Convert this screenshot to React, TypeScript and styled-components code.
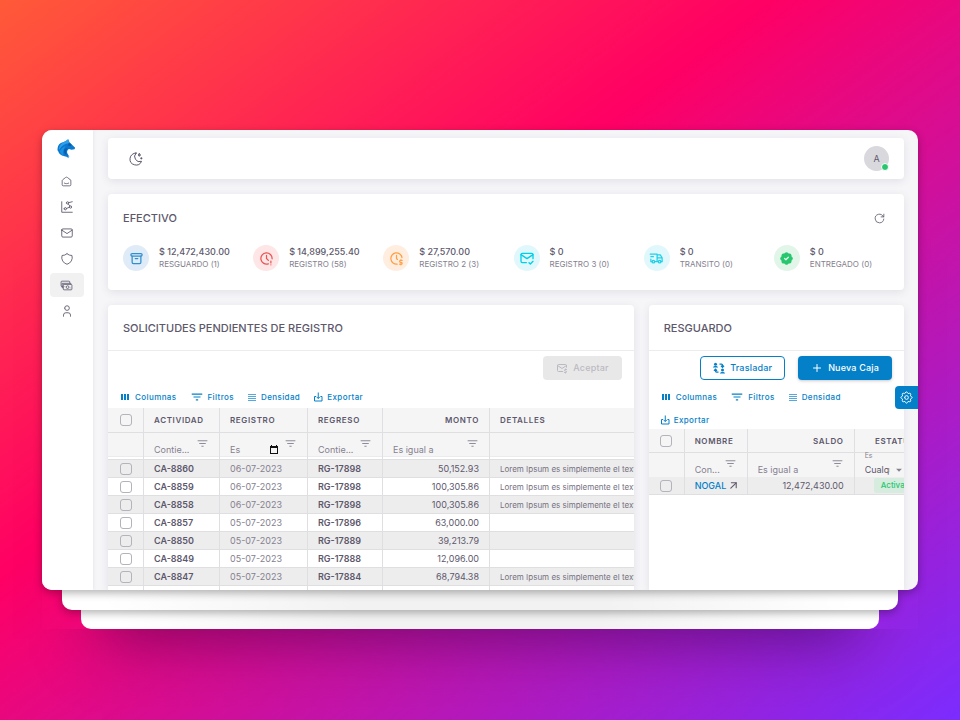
import React from "react";
import styled, { createGlobalStyle, css } from "styled-components";
import {
  TbSmartHome,
  TbChartDots2,
  TbMail,
  TbShield,
  TbUser,
  TbMoonStars,
  TbArchive,
  TbClockExclamation,
  TbClockDollar,
  TbMailCheck,
  TbMailDollar,
  TbTruckDelivery,
  TbRosetteDiscountCheckFilled,
  TbReload,
  TbArrowUpRight,
  TbPlus,
  TbSettings,
} from "react-icons/tb";
import { MdFilterList, MdArrowDropDown } from "react-icons/md";

const ink = "#5d586c";
const muted = "#85818f";
const primary = "#0480c8";
const line = "#dfdfe1";

const GlobalStyle = createGlobalStyle`
  * { box-sizing: border-box; }
  body {
    margin: 0;
    font-family: Inter, "Liberation Sans", sans-serif;
    font-size: 9px;
    line-height: 12px;
    color: ${ink};
  }
  button, input, select { font: inherit; color: inherit; }
`;

const Stage = styled.div`
  height: 100vh;
  display: flex;
  padding: 130px 42px 91px;
  overflow: hidden;
  background: linear-gradient(to bottom right, #ff5a38 0%, #ff0064 40%, #7b2cff 100%);
`;

const Stack = styled.div`
  flex: 1;
  min-width: 0;
  display: flex;
  flex-direction: column;
  box-shadow: 0 70px 60px -60px rgba(30, 0, 60, 0.5);
`;

const WindowShadow = styled.div`
  position: relative;
  z-index: 3;
  flex: 1;
  min-height: 0;
  display: flex;
  border-radius: 10px;
  box-shadow: 0 3px 8px rgba(0, 0, 0, 0.3);
`;

const Window = styled.div`
  position: relative;
  flex: 1;
  min-width: 0;
  display: flex;
  overflow: hidden;
  border-radius: 10px;
  background: #f6f6f9;
`;

const Layer = styled.div<{ $depth: number }>`
  position: relative;
  z-index: ${(p) => 3 - p.$depth};
  flex: none;
  height: ${(p) => (p.$depth === 1 ? 20 : 19)}px;
  margin: 0 ${(p) => (p.$depth === 1 ? 20 : 39)}px;
  border-radius: 0 0 10px 10px;
  background: linear-gradient(to right, #fff 5%, #f2f2f2 35%, #f2f2f2 65%, #fff 95%);
  box-shadow: ${(p) => (p.$depth === 1 ? "0 3px 8px rgba(0, 0, 0, 0.3)" : "none")};
`;

const Sidebar = styled.nav`
  flex: none;
  width: 51px;
  display: flex;
  flex-direction: column;
  align-items: center;
  gap: 2px;
  padding: 9px 2px 0 0;
  background: #fff;
  box-shadow: 0 0 4px rgba(75, 70, 92, 0.12);
`;

const Brand = styled.a`
  display: flex;
  height: 28px;
`;

const NavLink = styled.a<{ $active?: boolean }>`
  display: flex;
  align-items: center;
  justify-content: center;
  width: 34px;
  height: 24px;
  border-radius: 4px;
  color: ${ink};
  background: ${(p) => (p.$active ? "#f1f1f2" : "transparent")};
  svg {
    stroke-width: 1.5;
  }
`;

const Main = styled.main`
  flex: 1;
  min-width: 0;
  display: flex;
  flex-direction: column;
  gap: 15px;
  padding: 8px 14px 0 15px;
`;

const panel = css`
  background: #fff;
  border-radius: 4px;
  box-shadow: 0 2px 8px rgba(75, 70, 92, 0.12);
`;

const TopBar = styled.header`
  ${panel}
  flex: none;
  display: flex;
  align-items: center;
  justify-content: space-between;
  height: 41px;
  padding: 0 15px 0 20px;
`;

const IconButton = styled.button`
  display: flex;
  padding: 0;
  border: 0;
  background: none;
  color: ${ink};
  svg {
    stroke-width: 1.5;
  }
`;

const Avatar = styled.div`
  position: relative;
  display: flex;
  align-items: center;
  justify-content: center;
  width: 25px;
  height: 25px;
  border-radius: 50%;
  background: #d9d8dd;
`;

const Online = styled.span`
  position: absolute;
  right: 0;
  bottom: 0;
  width: 8px;
  height: 8px;
  border: 1px solid #fff;
  border-radius: 50%;
  background: #28c76f;
`;

const Card = styled.section`
  ${panel}
  flex: none;
  min-width: 0;
`;

const CardHead = styled.div<{ $ruled?: boolean }>`
  display: flex;
  align-items: center;
  justify-content: space-between;
  height: ${(p) => (p.$ruled ? 46 : 48)}px;
  padding: 0 18px 0 15px;
  border-bottom: ${(p) => (p.$ruled ? "1px solid #ececef" : "0")};
`;

const Title = styled.h2`
  margin: 0;
  font-size: 11px;
  line-height: 16px;
  font-weight: 500;
`;

const Stats = styled.div`
  display: grid;
  grid-template-columns: repeat(6, 1fr);
  padding: 3px 0 19px 15px;
`;

const Stat = styled.div`
  display: flex;
  align-items: center;
  gap: 10px;
`;

const Bubble = styled.span<{ $bg: string; $fg: string }>`
  display: flex;
  align-items: center;
  justify-content: center;
  flex: none;
  width: 26px;
  height: 26px;
  border-radius: 50%;
  background: ${(p) => p.$bg};
  color: ${(p) => p.$fg};
`;

const StatText = styled.div`
  white-space: nowrap;
`;

const Amount = styled.div`
  font-weight: 500;
  line-height: 13px;
`;

const Caption = styled.div`
  font-size: 8px;
  line-height: 13px;
  color: ${muted};
`;

const Panels = styled.div`
  flex: 1;
  min-height: 0;
  display: grid;
  grid-template-columns: repeat(12, minmax(0, 1fr));
  gap: 15px;
`;

const GridCard = styled(Card)<{ $span: number }>`
  grid-column: span ${(p) => p.$span};
  overflow: hidden;
  border-radius: 4px 4px 0 0;
`;

const Actions = styled.div`
  display: flex;
  justify-content: flex-end;
  gap: 13px;
  padding: 5px 12px 0;
`;

const ActionButton = styled.button<{ $kind: "solid" | "outline" | "disabled" }>`
  display: flex;
  align-items: center;
  gap: 5px;
  height: 24px;
  padding: 0 12px;
  border-radius: 4px;
  border: 1px solid transparent;
  font-weight: 500;
  letter-spacing: 0.02em;
  white-space: nowrap;
  ${(p) =>
    p.$kind === "solid" &&
    css`
      background: ${primary};
      color: #fff;
      box-shadow: 0 1px 3px rgba(75, 70, 92, 0.3);
    `}
  ${(p) =>
    p.$kind === "outline" &&
    css`
      background: #fff;
      color: ${primary};
      border-color: ${primary};
    `}
  ${(p) =>
    p.$kind === "disabled" &&
    css`
      background: #e8e8e9;
      color: #bcbac1;
    `}
`;

const Toolbar = styled.div`
  display: flex;
  flex-wrap: wrap;
  align-content: flex-start;
  gap: 7px 13px;
  min-height: 28px;
  padding: 9px 11px 1px;
`;

const Tool = styled.button`
  display: flex;
  align-items: center;
  gap: 4px;
  height: 16px;
  padding: 0;
  border: 0;
  background: none;
  color: ${primary};
  font-size: 8px;
  font-weight: 500;
  letter-spacing: 0.05em;
`;

const Table = styled.table`
  table-layout: fixed;
  border-collapse: separate;
  border-spacing: 0;
  width: 100%;
  min-width: max-content;
`;

const Col = styled.col<{ $w: number }>`
  width: ${(p) => p.$w}px;
`;

const HeadCell = styled.th<{ $end?: boolean; $h?: number }>`
  height: ${(p) => p.$h ?? 25}px;
  padding: 0 10px;
  border-bottom: 1px solid ${line};
  border-right: 1px solid ${line};
  background: #f5f5f6;
  font-size: 8px;
  line-height: 10px;
  font-weight: 600;
  letter-spacing: 0.08em;
  white-space: nowrap;
  text-align: ${(p) => (p.$end ? "right" : "left")};
  &:last-child {
    border-right: 0;
  }
`;

const FilterCell = styled.td<{ $ruled?: boolean }>`
  height: ${(p) => (p.$ruled ? 27 : 24)}px;
  padding: 0 10px;
  vertical-align: top;
  border-right: 1px solid ${line};
  background: #f5f5f6;
  box-shadow: ${(p) =>
    p.$ruled ? `inset 0 -1px ${line}, inset 0 -3px #fff, inset 0 -4px #ebebed` : "none"};
  &:last-child {
    border-right: 0;
  }
`;

const FilterBox = styled.div`
  display: flex;
  align-items: flex-start;
  height: 23px;
  color: ${muted};
  svg {
    flex: none;
  }
`;

const FilterInput = styled.input`
  flex: 1;
  align-self: flex-end;
  width: 0;
  min-width: 0;
  height: 12px;
  padding: 0;
  border: 0;
  outline: 0;
  background: none;
  &::placeholder {
    color: ${muted};
    opacity: 1;
  }
`;

const FilterIcon = styled.span`
  display: flex;
  padding-top: 4px;
  opacity: 0.9;
`;

const DateIcon = styled.span`
  display: flex;
  align-self: flex-end;
  padding-bottom: 2px;
  margin-right: 6px;
  color: #111;
`;

const StatusField = styled.label`
  display: block;
  font-size: 7px;
  line-height: 5px;
  color: ${muted};
`;

const StatusSelect = styled.span`
  display: flex;
  align-items: center;
  gap: 2px;
  padding-top: 5px;
`;

const Select = styled.select`
  flex: none;
  width: 25px;
  height: 14px;
  padding: 0;
  border: 0;
  appearance: none;
  background: none;
  font-size: 9px;
  line-height: 14px;
  color: ${ink};
`;

const Row = styled.tr<{ $striped?: boolean }>`
  background: ${(p) => (p.$striped ? "#ededee" : "#fff")};
`;

const Cell = styled.td<{ $kind?: "strong" | "soft" | "number" | "note" }>`
  height: 18px;
  padding: 0 10px;
  border-bottom: 1px solid ${line};
  border-right: 1px solid ${line};
  white-space: nowrap;
  line-height: 12px;
  &:last-child {
    border-right: 0;
  }
  ${(p) => p.$kind === "strong" && css`font-weight: 600;`}
  ${(p) => p.$kind === "soft" && css`color: ${muted};`}
  ${(p) => p.$kind === "number" && css`text-align: right;`}
  ${(p) => p.$kind === "note" && css`font-size: 8px; color: #75717f;`}
`;

const Check = styled.input`
  display: block;
  appearance: none;
  width: 12px;
  height: 12px;
  margin: 0 auto;
  border: 1px solid #b4b2ba;
  border-radius: 3px;
`;

const BoxLink = styled.a`
  display: flex;
  align-items: center;
  gap: 1px;
  color: ${primary};
  font-weight: 500;
  text-decoration: none;
  svg {
    flex: none;
    color: ${ink};
  }
`;

const Chip = styled.span`
  display: inline-block;
  margin-left: 9px;
  padding: 0 7px;
  height: 15px;
  border-radius: 2px;
  background: #d5ecdf;
  color: #28c76f;
  font-size: 8px;
  line-height: 15px;
  font-weight: 500;
`;

const SettingsTab = styled.button`
  position: absolute;
  top: 256px;
  right: 0;
  display: flex;
  align-items: center;
  justify-content: center;
  width: 23px;
  height: 23px;
  padding: 0;
  border: 0;
  border-radius: 4px 0 0 4px;
  background: ${primary};
  color: #fff;
  svg {
    stroke-width: 1.5;
  }
`;

const WolfLogo = () => (
  <svg width="19" height="20" viewBox="0 0 56 60" aria-hidden="true">
    <path
      fill="#0a78cf"
      d="M33 1 L37 10 L43 16 L54 26 L52 31 L43 32 L36 30 C31 32 29 36 30 42 L37 54 L33 52 L35 58 L28 53 L22 52 C11 49 4 43 4 38 L1 34 C1 24 3 16 11 12 L25 7 Z"
    />
    <path fill="#2ea0ea" d="M25 7 L33 1 L36 12 L25 15 C17 18 10 24 6 33 C5 22 10 13 25 7 Z" />
    <path fill="#0b5cab" d="M36 12 L43 16 L40 22 L31 19 Z M22 30 L32 27 C27 32 25 38 28 49 C21 44 19 37 22 30 Z" />
    <path fill="#1b8fe0" d="M8 36 C13 28 18 24 26 21 C18 30 16 42 20 51 C13 48 9 43 8 36 Z" />
  </svg>
);

const CashIcon = () => (
  <svg width="13" height="13" viewBox="0 0 24 24" fill="none" stroke="currentColor" strokeLinejoin="round" aria-hidden="true">
    <path d="M18 8V5.500a1.500 1.500 0 0 0-1.500-1.500h-13A1.500 1.500 0 0 0 2 5.500v7A1.500 1.500 0 0 0 3.500 14H6" />
    <path d="M20 10V8H4v8h2" />
    <path d="M6 10h14.500A1.500 1.500 0 0 1 22 11.500v7a1.500 1.500 0 0 1-1.500 1.500h-13A1.500 1.500 0 0 1 6 18.500z" />
    <circle cx="14" cy="15" r="2.500" />
    <path d="M9 13v1M19 16v1" />
  </svg>
);

const TransferIcon = () => (
  <svg width="12" height="12" viewBox="0 0 24 24" fill="none" stroke="currentColor" strokeWidth="2.500" aria-hidden="true">
    <circle cx="5" cy="4.500" r="3" fill="currentColor" stroke="none" />
    <path fill="currentColor" stroke="none" d="M0 11c0-2 2-3 5-3s5 1 5 3z" />
    <circle cx="19" cy="16" r="3" fill="currentColor" stroke="none" />
    <path fill="currentColor" stroke="none" d="M14 23c0-2 2-3 5-3s5 1 5 3z" />
    <path d="M13 4h4a2 2 0 0 1 2 2v4M16 7.500l3 3 3-3M11 20H7a2 2 0 0 1-2-2v-3M2 17.500l3-3 3 3" />
  </svg>
);

const ColumnsIcon = () => (
  <svg width="12" height="12" viewBox="0 0 12 12" fill="currentColor" aria-hidden="true">
    <path d="M2 3h2v6H2zM5 3h2v6H5zM8 3h2v6H8z" />
  </svg>
);

const DensityIcon = () => (
  <svg width="10" height="12" viewBox="0 0 10 12" stroke="currentColor" strokeOpacity="0.85" aria-hidden="true">
    <path d="M1 3.500h8M1 5.500h8M1 7.500h8M1 9.500h8" strokeWidth="0.800" />
  </svg>
);

const DownloadIcon = () => (
  <svg width="10" height="10" viewBox="0 0 20 20" fill="none" stroke="currentColor" strokeWidth="2" strokeLinejoin="round" aria-hidden="true">
    <path d="M6 9H3v9h15V9h-3M10.500 1v12M7 9.500l3.500 3.500L14 9.500" />
  </svg>
);

const CalendarIcon = () => (
  <svg width="8" height="9" viewBox="0 0 8 9" aria-hidden="true">
    <path fill="currentColor" fillRule="evenodd" d="M0 1h1V0h1v1h4V0h1v1h1v8H0zM1 3v5h6V3z" />
  </svg>
);

const stats = [
  { amount: "$ 12,472,430.00", label: "RESGUARDO (1)", bg: "#dfecf7", fg: "#2f8fd0", icon: <TbArchive size={15} /> },
  { amount: "$ 14,899,255.40", label: "REGISTRO (58)", bg: "#fde6e5", fg: "#ea5455", icon: <TbClockExclamation size={15} /> },
  { amount: "$ 27,570.00", label: "REGISTRO 2 (3)", bg: "#ffeee0", fg: "#ff9f43", icon: <TbClockDollar size={15} /> },
  { amount: "$ 0", label: "REGISTRO 3 (0)", bg: "#e0f8fc", fg: "#00cfe8", icon: <TbMailCheck size={16} /> },
  { amount: "$ 0", label: "TRANSITO (0)", bg: "#e0f8fc", fg: "#1fd0e8", icon: <TbTruckDelivery size={15} /> },
  { amount: "$ 0", label: "ENTREGADO (0)", bg: "#e1f6e9", fg: "#28c76f", icon: <TbRosetteDiscountCheckFilled size={15} /> },
];

const note = "Lorem Ipsum es simplemente el texto";

const requests = [
  { id: "CA-8860", date: "06-07-2023", ret: "RG-17898", amount: "50,152.93", note },
  { id: "CA-8859", date: "06-07-2023", ret: "RG-17898", amount: "100,305.86", note },
  { id: "CA-8858", date: "06-07-2023", ret: "RG-17898", amount: "100,305.86", note },
  { id: "CA-8857", date: "05-07-2023", ret: "RG-17896", amount: "63,000.00", note: "" },
  { id: "CA-8850", date: "05-07-2023", ret: "RG-17889", amount: "39,213.79", note: "" },
  { id: "CA-8849", date: "05-07-2023", ret: "RG-17888", amount: "12,096.00", note: "" },
  { id: "CA-8847", date: "05-07-2023", ret: "RG-17884", amount: "68,794.38", note },
];

const navItems = [
  { name: "Inicio", icon: <TbSmartHome size={13} /> },
  { name: "Gráficas", icon: <TbChartDots2 size={14} /> },
  { name: "Correo", icon: <TbMail size={14} /> },
  { name: "Seguridad", icon: <TbShield size={14} /> },
  { name: "Efectivo", icon: <CashIcon />, active: true },
  { name: "Usuario", icon: <TbUser size={14} /> },
];

const GridToolbar = () => (
  <Toolbar>
    <Tool><ColumnsIcon />Columnas</Tool>
    <Tool><MdFilterList size={14} />Filtros</Tool>
    <Tool><DensityIcon />Densidad</Tool>
    <Tool><DownloadIcon />Exportar</Tool>
  </Toolbar>
);

const Filter = ({ label, hint, date }: { label: string; hint: string; date?: boolean }) => (
  <FilterBox>
    <FilterInput aria-label={label} placeholder={hint} />
    {date && <DateIcon><CalendarIcon /></DateIcon>}
    <FilterIcon><MdFilterList size={13} /></FilterIcon>
  </FilterBox>
);

export default function App() {
  return (
    <>
      <GlobalStyle />
      <Stage>
        <Stack>
          <WindowShadow>
            <Window>
              <Sidebar>
                <Brand href="#" aria-label="Portada"><WolfLogo /></Brand>
                {navItems.map((item) => (
                  <NavLink key={item.name} href="#" aria-label={item.name} $active={item.active}>
                    {item.icon}
                  </NavLink>
                ))}
              </Sidebar>
              <Main>
                <TopBar>
                  <IconButton aria-label="Modo oscuro"><TbMoonStars size={16} /></IconButton>
                  <Avatar>A<Online /></Avatar>
                </TopBar>

                <Card>
                  <CardHead>
                    <Title>EFECTIVO</Title>
                    <IconButton aria-label="Actualizar"><TbReload size={13} /></IconButton>
                  </CardHead>
                  <Stats>
                    {stats.map((s) => (
                      <Stat key={s.label}>
                        <Bubble $bg={s.bg} $fg={s.fg}>{s.icon}</Bubble>
                        <StatText>
                          <Amount>{s.amount}</Amount>
                          <Caption>{s.label}</Caption>
                        </StatText>
                      </Stat>
                    ))}
                  </Stats>
                </Card>

                <Panels>
                  <GridCard $span={8}>
                    <CardHead $ruled><Title>SOLICITUDES PENDIENTES DE REGISTRO</Title></CardHead>
                    <Actions>
                      <ActionButton $kind="disabled" disabled><TbMailDollar size={12} />Aceptar</ActionButton>
                    </Actions>
                    <GridToolbar />
                    <Table>
                      <colgroup>
                        <Col $w={36} /><Col $w={76} /><Col $w={88} /><Col $w={75} /><Col $w={107} /><col />
                      </colgroup>
                      <thead>
                        <tr>
                          <HeadCell><Check type="checkbox" aria-label="Seleccionar todo" /></HeadCell>
                          <HeadCell>ACTIVIDAD</HeadCell>
                          <HeadCell>REGISTRO</HeadCell>
                          <HeadCell>REGRESO</HeadCell>
                          <HeadCell $end>MONTO</HeadCell>
                          <HeadCell>DETALLES</HeadCell>
                        </tr>
                        <tr>
                          <FilterCell $ruled />
                          <FilterCell $ruled><Filter label="Actividad" hint="Contie..." /></FilterCell>
                          <FilterCell $ruled><Filter label="Registro" hint="Es" date /></FilterCell>
                          <FilterCell $ruled><Filter label="Regreso" hint="Contie..." /></FilterCell>
                          <FilterCell $ruled><Filter label="Monto" hint="Es igual a" /></FilterCell>
                          <FilterCell $ruled />
                        </tr>
                      </thead>
                      <tbody>
                        {requests.map((r, i) => (
                          <Row key={r.id} $striped={i % 2 === 0}>
                            <Cell><Check type="checkbox" aria-label={r.id} /></Cell>
                            <Cell $kind="strong">{r.id}</Cell>
                            <Cell $kind="soft">{r.date}</Cell>
                            <Cell $kind="strong">{r.ret}</Cell>
                            <Cell $kind="number">{r.amount}</Cell>
                            <Cell $kind="note">{r.note}</Cell>
                          </Row>
                        ))}
                        <Row>
                          <Cell /><Cell /><Cell /><Cell /><Cell /><Cell />
                        </Row>
                      </tbody>
                    </Table>
                  </GridCard>

                  <GridCard $span={4}>
                    <CardHead $ruled><Title>RESGUARDO</Title></CardHead>
                    <Actions>
                      <ActionButton $kind="outline"><TransferIcon />Trasladar</ActionButton>
                      <ActionButton $kind="solid"><TbPlus size={12} />Nueva Caja</ActionButton>
                    </Actions>
                    <GridToolbar />
                    <Table>
                      <colgroup>
                        <Col $w={36} /><Col $w={63} /><Col $w={107} /><Col $w={71} />
                      </colgroup>
                      <thead>
                        <tr>
                          <HeadCell $h={24}><Check type="checkbox" aria-label="Seleccionar todo" /></HeadCell>
                          <HeadCell $h={24}>NOMBRE</HeadCell>
                          <HeadCell $h={24} $end>SALDO</HeadCell>
                          <HeadCell $h={24} $end>ESTATUS</HeadCell>
                        </tr>
                        <tr>
                          <FilterCell />
                          <FilterCell><Filter label="Nombre" hint="Con..." /></FilterCell>
                          <FilterCell><Filter label="Saldo" hint="Es igual a" /></FilterCell>
                          <FilterCell>
                            <StatusField>
                              Es
                              <StatusSelect>
                                <Select defaultValue="any"><option value="any">Cualquiera</option></Select>
                                <MdArrowDropDown size={14} />
                              </StatusSelect>
                            </StatusField>
                          </FilterCell>
                        </tr>
                      </thead>
                      <tbody>
                        <Row $striped>
                          <Cell><Check type="checkbox" aria-label="NOGAL" /></Cell>
                          <Cell><BoxLink href="#">NOGAL<TbArrowUpRight size={13} /></BoxLink></Cell>
                          <Cell $kind="number">12,472,430.00</Cell>
                          <Cell><Chip>Activa</Chip></Cell>
                        </Row>
                      </tbody>
                    </Table>
                  </GridCard>
                </Panels>
              </Main>
              <SettingsTab aria-label="Configuración"><TbSettings size={15} /></SettingsTab>
            </Window>
          </WindowShadow>
          <Layer $depth={1} />
          <Layer $depth={2} />
        </Stack>
      </Stage>
    </>
  );
}
